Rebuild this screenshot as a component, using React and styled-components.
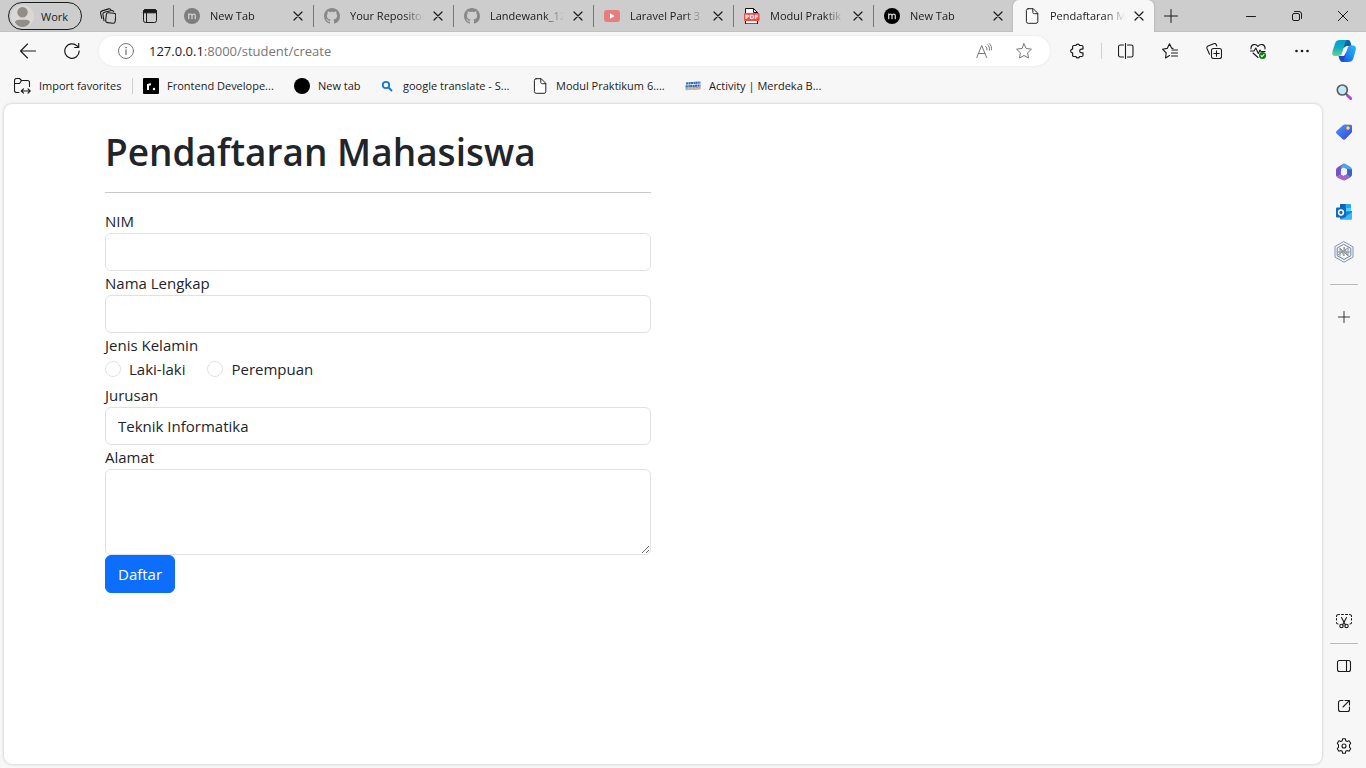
import React from "react";
import styled, { createGlobalStyle } from "styled-components";

const uiFont = `"Segoe UI", "Open Sans", "Noto Sans", sans-serif`;

const GlobalStyle = createGlobalStyle`
  *, *::before, *::after { box-sizing: border-box; }
  body {
    margin: 0;
    background: #f7f7f7;
    color: #1b1b1b;
    font-family: ${uiFont};
    font-size: 11px;
  }
  button, input, select, textarea { font-family: inherit; }
`;

const Browser = styled.div`
  display: flex;
  flex-direction: column;
  min-height: 100vh;
`;

/* Tab strip */
const TabStrip = styled.header`
  display: flex;
  height: 32px;
  background: #cdcdcd;
  box-shadow: inset 0 -1px 0 #c0c0c0;
`;

const Profile = styled.button`
  display: flex;
  align-items: center;
  gap: 7px;
  width: 74px;
  height: 28px;
  margin: 2px 5px 2px 8px;
  padding: 0 0 0 2px;
  border: 1px solid #1b1b1b;
  border-radius: 14px;
  background: transparent;
  color: #1b1b1b;
  font-size: 11px;
`;

const IconButton = styled.button`
  display: flex;
  flex: none;
  align-items: center;
  justify-content: center;
  width: ${(p) => p.$width || 44}px;
  height: ${(p) => p.$height || 32}px;
  padding: 0;
  border: 0;
  background: transparent;
  color: ${(p) => p.$color || "#1b1b1b"};
`;

const Tabs = styled.nav`
  display: flex;
  flex: 0 1 981px;
  min-width: 0;
  margin-left: 2px;
`;

const Tab = styled.div`
  display: flex;
  flex: 0 1 ${(p) => (p.$active ? 141 : 140)}px;
  align-items: center;
  min-width: 0;
  padding: 0 1px 0 ${(p) => (p.$active ? 11 : 10)}px;
  border-left: ${(p) => (p.$active ? "0" : "1px solid transparent")};
  border-image: linear-gradient(transparent 6px, #777 6px, #777 26px, transparent 26px) 1;
  border-radius: ${(p) => (p.$active ? "6px 6px 0 0" : "0")};
  background: ${(p) => (p.$active ? "#f7f7f7" : "transparent")};
  box-shadow: ${(p) => (p.$active ? "0 0 2px #999" : "none")};
  clip-path: inset(0 -3px 0 -3px);
`;

const TabTitle = styled.span`
  flex: 1;
  min-width: 0;
  margin-left: 10px;
  overflow: hidden;
  line-height: 20px;
  white-space: nowrap;
  mask-image: linear-gradient(to right, #000 calc(100% - 20px), transparent);
`;

const WindowControls = styled.div`
  display: flex;
  margin-left: auto;
`;

/* Address bar */
const Toolbar = styled.div`
  display: flex;
  align-items: center;
  height: 38px;
  padding: 0 2px 0 6px;
`;

const AddressBar = styled.div`
  display: flex;
  flex: 1;
  align-items: center;
  min-width: 0;
  height: 30px;
  margin: 0 5px;
  padding: 0 6px 0 19px;
  border-radius: 15px;
  background: #fff;
  box-shadow: 0 0 3px #e4e4e4;
`;

const Url = styled.div`
  flex: 1;
  margin-left: 15px;
  color: #767676;
  font-size: 13px;
  line-height: 20px;
  b { color: #1b1b1b; font-weight: 400; }
`;

const Divider = styled.span`
  width: 1px;
  height: 16px;
  margin: 0 2px;
  background: #cfcfcf;
`;

/* Area below the toolbar */
const Workspace = styled.div`
  display: flex;
  flex: 1;
`;

const MainColumn = styled.div`
  display: flex;
  flex: 1;
  flex-direction: column;
  min-width: 0;
`;

const Favorites = styled.nav`
  display: flex;
  align-items: center;
  height: 34px;
  padding: 0 0 2px 6px;
`;

const FavoriteList = styled.div`
  display: flex;
  gap: 8px;
`;

const Favorite = styled.a`
  display: flex;
  flex: none;
  align-items: center;
  gap: 8px;
  padding-left: 8px;
  color: #1b1b1b;
  line-height: 20px;
  text-decoration: none;
  white-space: nowrap;
`;

const FavoriteName = styled.span`
  width: ${(p) => p.$width}px;
`;

const Page = styled.main`
  flex: 1;
  margin: 0 0 4px 4px;
  padding-top: 24px;
  border-radius: 8px;
  background: #fff;
  box-shadow: 0 0 3px #bbb;
`;

const Container = styled.div`
  max-width: 1140px;
  margin: 0 auto;
`;

const Form = styled.form`
  width: 50%;
  padding: 0 12px;
  color: #212529;
  font-size: 15px;
  line-height: 24px;
`;

const Title = styled.h1`
  margin: 0;
  font-size: 37px;
  font-weight: 600;
  line-height: 48px;
  white-space: nowrap;
`;

const Rule = styled.hr`
  margin: 16px 0;
  border: 0;
  border-top: 1px solid #c8c9ca;
`;

const Label = styled.label`
  display: block;
`;

const fieldStyle = `
  display: block;
  width: 100%;
  padding: 6px 12px;
  border: 1px solid #dee2e6;
  border-radius: 6px;
  background: #fff;
  color: #212529;
  font-size: 15px;
  line-height: 24px;
`;

const TextInput = styled.input`
  ${fieldStyle}
  height: 38px;
`;

const Select = styled.select`
  ${fieldStyle}
  height: 38px;
  appearance: none;
`;

const TextArea = styled.textarea`
  ${fieldStyle}
  height: 86px;
  resize: vertical;
`;

const FieldGroup = styled.fieldset`
  margin: 0;
  padding: 0;
  border: 0;
`;

const Legend = styled.legend`
  padding: 0;
`;

const RadioRow = styled.div`
  display: flex;
  gap: 22px;
  padding-bottom: 2px;
`;

const RadioLabel = styled.label`
  display: flex;
  align-items: center;
  gap: 8px;
`;

const Radio = styled.input`
  width: 16px;
  height: 16px;
  margin: 0;
  border: 1px solid #dee2e6;
  border-radius: 50%;
  background: #fff;
  appearance: none;
  &:checked { border: 5px solid #0d6efd; }
`;

const Submit = styled.button`
  display: block;
  height: 38px;
  padding: 6px 12px;
  border: 1px solid #0d6efd;
  border-radius: 6px;
  background: #0d6efd;
  color: #fff;
  font-size: 15px;
  line-height: 24px;
`;

/* Right side rail */
const SideRail = styled.aside`
  display: flex;
  flex-direction: column;
  align-items: center;
  width: 44px;
  padding: 2px 0;
`;

const RailRule = styled.span`
  width: 28px;
  height: 1px;
  margin: ${(p) => (p.$compact ? 2 : 12)}px 0;
  background: #b9b9b9;
`;

const Spacer = styled.span`
  flex: 1;
`;

/* Drawings */
const Svg = styled.svg`
  display: block;
  flex: none;
  fill: none;
  stroke: currentColor;
  stroke-linecap: round;
  stroke-linejoin: round;
`;

const Icon = ({ size = 16, box = 16, stroke = 1, children }) => (
  <Svg width={size} height={size} viewBox={`0 0 ${box} ${box}`} strokeWidth={stroke} aria-hidden="true">
    {children}
  </Svg>
);

const Avatar = () => (
  <Icon size={23} box={22}>
    <circle cx="11" cy="11" r="11" fill="#dad7d4" stroke="none" />
    <circle cx="11" cy="7" r="5" fill="#918d89" stroke="none" />
    <path d="M4 16.500c0-2 2-2.500 7-2.500s7 .5 7 2.500c-1 3-4 4.500-7 4.500s-6-1.500-7-4.500z" fill="#918d89" stroke="none" />
  </Icon>
);

const WorkspacesIcon = () => (
  <Icon stroke={1.1}>
    <rect x="6" y="5" width="9.500" height="10" rx="2" transform="rotate(6 11 10)" />
    <path d="M4 12.800 2.900 6.500a2 2 0 0 1 1.500-2.200l7-1.800a2 2 0 0 1 2.200 1.100" />
    <path d="M1.800 10.500.6 5.200a2 2 0 0 1 1.500-2.300l6.500-2a2 2 0 0 1 2.200.8" />
  </Icon>
);

const TabActionsIcon = () => (
  <Icon>
    <rect x="1.500" y="1.500" width="13" height="13" rx="2" />
    <path d="M1.500 3.500c0-1.200.8-2 2-2h9c1.200 0 2 .8 2 2v1.300h-13z" fill="currentColor" />
    <path d="M4.500 5v9.500" />
  </Icon>
);

const MIcon = ({ color }) => (
  <Icon>
    <circle cx="8" cy="8" r="8" fill={color} stroke="none" />
    <path d="M4.700 10.700V6M4.700 7.400c.4-1.700 3.200-1.800 3.300.2v3.100M8 7.500c.5-1.800 3.300-1.800 3.300.2v3" stroke="#d0d0d0" strokeWidth="1.300" />
  </Icon>
);

const GithubIcon = () => (
  <Icon>
    <path stroke="none" fill="#888" d="M8 0C3.580 0 0 3.580 0 8c0 3.540 2.290 6.530 5.470 7.590.4.070.55-.17.55-.38 0-.19-.01-.82-.01-1.490-2.010.37-2.530-.49-2.690-.94-.09-.23-.48-.94-.82-1.130-.28-.15-.68-.52-.01-.53.63-.01 1.080.58 1.230.82.72 1.210 1.870.87 2.330.66.070-.52.28-.87.51-1.070-1.780-.2-3.640-.89-3.640-3.950 0-.87.31-1.590.82-2.150-.08-.2-.36-1.020.08-2.120 0 0 .67-.21 2.200.82.64-.18 1.320-.27 2-.27s1.360.09 2 .27c1.530-1.040 2.200-.82 2.200-.82.44 1.100.16 1.920.08 2.120.51.56.82 1.270.82 2.150 0 3.070-1.870 3.750-3.650 3.950.29.25.54.73.54 1.480 0 1.070-.01 1.930-.01 2.200 0 .21.15.46.55.38A8.010 8.010 0 0 0 16 8c0-4.420-3.580-8-8-8z" />
  </Icon>
);

const YoutubeIcon = () => (
  <Icon>
    <rect y="2" width="16" height="12" rx="3" fill="#e87c7f" stroke="none" />
    <path d="M6 5.300v5.400L10.700 8z" fill="#fff" stroke="none" />
  </Icon>
);

const PdfText = styled.text`
  fill: #fff;
  stroke: none;
  font: 700 6px "DejaVu Sans", sans-serif;
`;

const PdfIcon = () => (
  <Icon>
    <path d="M1.500 15.500V.5h8L13.500 4.500v11z" fill="#fff" stroke="#111" />
    <path d="M9.500.5v4h4" stroke="#111" />
    <rect x="0" y="5" width="15.500" height="8" rx="1" fill="#f44" stroke="none" />
    <PdfText x="1" y="11">PDF</PdfText>
  </Icon>
);

const FileIcon = () => (
  <Icon>
    <path d="M4.200.7h5l4.600 4.600v8.200a1.800 1.800 0 0 1-1.800 1.800H4.200a1.800 1.800 0 0 1-1.800-1.800v-11A1.800 1.800 0 0 1 4.200.7z" stroke="#222" fill="#fff" />
    <path d="M8.800.9v3.300c0 1 .5 1.500 1.500 1.500h3.300" stroke="#222" />
  </Icon>
);

const CloseIcon = () => (
  <Icon size={10} box={10} stroke={1.2}><path d="m1 1 8 8M9 1 1 9" /></Icon>
);

const PlusIcon = ({ size = 14 }) => (
  <Icon size={size} box={14}><path d="M7 .5v13M.5 7h13" /></Icon>
);

const BackIcon = () => (
  <Icon stroke={1.1}><path d="M15.500 8H.7M7.500 1 .6 8l6.900 7" /></Icon>
);

const ReloadIcon = () => (
  <Icon stroke={1.2}><path d="M15.200 8A7.200 7.200 0 1 1 13 2.900l1.500 1.500M14.700.5v4h-4" /></Icon>
);

const InfoIcon = () => (
  <Icon><g stroke="#767676"><circle cx="8" cy="8" r="7.500" /><path d="M8 7v4.500" strokeWidth="1.300" /><circle cx="8" cy="4.700" r=".4" /></g></Icon>
);

const ReadAloudIcon = () => (
  <Icon><path d="m.8 14.500 4.900-12 4.900 12M2.300 10.500H9M9.700 3.500c1 .8 1.400 2 1.200 3.400M11.500 1.700c1.700 1.400 2.300 3.400 1.900 5.500M13.300.5c2 1.800 2.500 4 2.100 6.400" /></Icon>
);

const StarIcon = () => (
  <Icon><path d="m8 .8 2.200 4.700 5.200.7-3.800 3.600.9 5.200L8 12.500 3.500 15l.9-5.200L.6 6.200l5.200-.7z" /></Icon>
);

const PuzzleIcon = () => (
  <Icon stroke={1.2}><path d="M4.800 2.500h2.100a1.900 1.900 0 0 1 3.700 0h2.200a1.200 1.200 0 0 1 1.200 1.200v2.400h-1.400a1.900 1.900 0 0 0 0 3.800H14v2.400a1.200 1.200 0 0 1-1.200 1.200h-2.200a1.900 1.900 0 0 1-3.700 0H4.800a1.200 1.200 0 0 1-1.200-1.200V9.900a1.900 1.900 0 0 1 0-3.800V3.700a1.200 1.200 0 0 1 1.200-1.200z" /></Icon>
);

const SplitIcon = () => (
  <Icon stroke={1.1}><path d="M5.500 2H2.300C1.300 2 .5 2.800.5 3.800v8.400c0 1 .8 1.800 1.800 1.800h3.200M7.500.5v15M9.500 2h3.700c1 0 1.800.8 1.800 1.800v8.400c0 1-.8 1.800-1.800 1.800H9.500" /></Icon>
);

const FavoritesIcon = () => (
  <Icon stroke={1.1}><path d="M7.500 12.500 3.500 15l.7-5L.5 6.200l4.700-.8L7.500.7l2.200 4.500 1.300.2M10 7h5.500M9.500 10h6M9.500 13h6" /></Icon>
);

const CollectionsIcon = () => (
  <Icon stroke={1.1}><rect x="5.500" y="5.500" width="10" height="10" rx="2" /><path d="M10.500 7.800v5.400M7.800 10.500h5.400M3.500 11.300 1 5.500a2 2 0 0 1 1-2.500L7.700.7a2 2 0 0 1 2.600 1l.5 1.300" /></Icon>
);

const HeartIcon = () => (
  <Icon stroke={1.1}>
    <path d="M1 6C.5 1 6 .2 8 3.500 10 .2 15.500 1 15 6M.5 8H4l1.800-3 2.500 5.500L10 7l1 1.500h4M3 10l5 4.500" />
    <circle cx="12.500" cy="12.500" r="3.500" fill="#107c10" stroke="none" /><path d="m11 12.700 1 1 2-2.200" stroke="#fff" />
  </Icon>
);

const DotsIcon = () => (
  <Icon><g fill="currentColor" stroke="none"><circle cx="2.500" cy="8" r="1.300" /><circle cx="8" cy="8" r="1.300" /><circle cx="13.500" cy="8" r="1.300" /></g></Icon>
);

const CopilotIcon = () => (
  <Icon size={24} box={24}>
    <defs>
      <linearGradient id="copilotLeft" x1="0" y1="0" x2="0" y2="1"><stop offset="0" stopColor="#079dd2" /><stop offset=".5" stopColor="#15aebd" /><stop offset="1" stopColor="#6bd58b" /></linearGradient>
      <linearGradient id="copilotRight" x1="0" y1="1" x2="1" y2="0"><stop offset="0" stopColor="#1b50d8" /><stop offset=".6" stopColor="#1b96f5" /><stop offset="1" stopColor="#2bbcf4" /></linearGradient>
    </defs>
    <g stroke="none">
      <path d="M12 1h4c2 0 2.500 2 3 4l.5 2h-5L10 10z" fill="#07639f" />
      <path d="M6.500 17h5.500l3-5-1 9c-.5 1.500-1.500 2-3 2-2.500 0-3.500-2-4.500-6z" fill="#1a49cf" />
      <path d="M8 1h8c-2 0-2.500 1.500-3 3l-3 10c-.6 2-1.500 3-3.500 3H3c-3 0-3-2.500-2.400-5L3 4.500C3.700 2 5.500 1 8 1z" fill="url(#copilotLeft)" />
      <path d="M16 23H9c2 0 2.800-1 3.300-3l3-10c.6-2 1.500-3.500 3.500-3.500H21c3 0 3.300 2.500 2.600 5l-2.300 8C20.600 22 19 23 16 23z" fill="url(#copilotRight)" />
    </g>
  </Icon>
);

const ImportIcon = () => (
  <Icon size={17} box={17} stroke={1.1}><path d="M5 14.500H2.500a2 2 0 0 1-2-2v-10a2 2 0 0 1 2-2h3l2 2h6a2 2 0 0 1 2 2v4M.5 5.500h5l2-3M7.500 13h8.500M9.500 10.800 7.300 13l2.200 2.200M14 10.800l2.200 2.200-2.200 2.200" /></Icon>
);

const RoadmapIcon = () => (
  <Icon><rect width="16" height="16" rx="1" fill="#000" stroke="none" /><path d="M5 12V6M5 8c.3-1.300 1.400-1.800 3-1.600" stroke="#fff" strokeWidth="2" strokeLinecap="butt" /><circle cx="11" cy="11" r="1.200" fill="#fff" stroke="none" /></Icon>
);

const BlackDotIcon = () => (
  <Icon><circle cx="8" cy="8" r="8" fill="#000" stroke="none" /></Icon>
);

const BlueSearchIcon = () => (
  <Icon><g stroke="#1976d2" strokeWidth="1.800"><circle cx="7" cy="7" r="3.200" /><path d="m9.500 9.500 3 3" /></g></Icon>
);

const MerdekaIcon = () => (
  <Icon>
    <g strokeLinecap="butt">
      <path d="M1 5.500 15.500 4.500M.5 8.500 15.500 7.500" stroke="#3469b5" strokeWidth="2.200" strokeDasharray="2.400 .4 1.600 .3" />
      <path d="M.5 10.300 15.500 9.500" stroke="#79a3d6" strokeWidth="1.400" strokeDasharray="3 .4" />
      <path d="M.5 12c5-1.800 9 .2 15-1.500" stroke="#f0a075" strokeWidth="1.300" />
    </g>
  </Icon>
);

const MagnifierIcon = () => (
  <Icon>
    <path d="m10.200 10 1.500 1.500" stroke="#555" strokeWidth="2" />
    <path d="m12 12 2.700 2.500" stroke="#b73ee8" strokeWidth="3" />
    <circle cx="6.300" cy="6" r="5" fill="#c5e7fa" stroke="#5b5b5b" strokeWidth="1.700" />
  </Icon>
);

const TagIcon = () => (
  <Icon>
    <defs><linearGradient id="tagBlue" x1="0" y1="0" x2="1" y2="1"><stop stopColor="#4aa0f8" /><stop offset="1" stopColor="#3d3ddb" /></linearGradient></defs>
    <path d="M9 .5 14.500.7c1 0 1.500.6 1.500 1.500v5c0 .7-.2 1.200-.7 1.700l-5.800 6c-1 1-2 1-3 0L.7 9.700c-.9-1-.9-2 .1-2.900L7 1.200C7.600.7 8.200.5 9 .5z" fill="url(#tagBlue)" stroke="none" />
    <circle cx="12" cy="4" r="1.500" fill="#f5e6b0" stroke="#f5b821" />
  </Icon>
);

const OfficeIcon = () => (
  <Icon size={18} box={18}>
    <g stroke="none">
      <path d="M9 .5 3 4C1.700 4.800 1 5.800 1 7.300v4.500c0 1 .3 1.700 1 2.200l4-2.500V6.800c0-.8.3-1.300 1-1.700L11.500 2.500z" fill="#6a55cc" />
      <path d="M8 1.200C9 .6 10 .6 11 1.200L15.300 3.800c1.200.8 1.700 1.800 1.700 3.200v2L12 6.200 8.500 4.500 6 6V3.500z" fill="#4aa8e8" />
      <path d="M17 6.500v4.800c0 1.300-.6 2.300-1.800 3L12 16.200l-3-3.700 3-2V6z" fill="#3862c4" />
      <path d="M2 14l4-2.500 3 1.600 3-1.800 3.500 2.700-4.700 3c-1.100.6-2.400.6-3.500 0L3 15c-.5-.3-.8-.6-1-1z" fill="#a765c8" />
      <circle cx="9" cy="9" r="3.200" fill="#f3f3fa" />
    </g>
  </Icon>
);

const OutlookIcon = () => (
  <Icon>
    <g stroke="none">
      <rect x="4" y="0" width="11" height="9" rx="1" fill="#28a8ea" /><path d="M4 0h5.500v5H4z" fill="#0a64b4" /><path d="M9.500 4H15v4H9.500z" fill="#50d0ff" />
      <path d="M4 8 16 7v7c0 .8-.5 1.500-1.500 1.500H5.500C4.500 15.500 4 15 4 14z" fill="#1684d4" /><path d="m6 15 10-7v6c0 .8-.5 1.500-1.500 1.500z" fill="#39baf0" />
      <rect y="3.500" width="10" height="10" rx="1" fill="#0f6cbd" />
    </g>
    <circle cx="5" cy="8.500" r="2.400" stroke="#fff" strokeWidth="1.500" />
  </Icon>
);

const HexagonIcon = () => (
  <Icon size={22} box={22}>
    <path d="m11 .8 9 5.100v10.200l-9 5.100-9-5.100V5.900z" stroke="#7f8fc4" />
    <path d="m11 3.500 6.800 3.800v7.400L11 18.500l-6.800-3.800V7.300z" stroke="#7a8390" />
    <path d="M7 15V7l4 8V6l4 9V7M5 11h12M7 7l8 8M5 14l10-7" stroke="#8c949d" />
  </Icon>
);

const SnipIcon = () => (
  <Icon stroke={1.1}><path d="M2.500 1.500h1M5.500 1.500h2M9.500 1.500h2M13.500 1.500c1 0 2 .8 2 2M15.500 5.500v1.500M15.500 9.500c0 1-.5 1.500-1.500 1.500M2.500 1.500c-1 0-2 .8-2 2M.5 5.500V7M.5 9.500c0 1 .5 1.500 1.500 1.500M5.500 4.500 9.500 12M10.500 4.500 6.500 12" /><circle cx="5.500" cy="13" r="1.700" /><circle cx="10.500" cy="13" r="1.700" /></Icon>
);

const PanelIcon = () => (
  <Icon stroke={1.1}><rect x="1.500" y="2.500" width="13" height="11" rx="2" /><path d="M10.500 2.500v11" /></Icon>
);

const ExternalIcon = () => (
  <Icon stroke={1.1}><path d="M7 2.500H4.500a2 2 0 0 0-2 2v7a2 2 0 0 0 2 2h7a2 2 0 0 0 2-2V9M9 2.500h4.500V7M13.300 2.700 7 9" /></Icon>
);

const GearIcon = () => (
  <Icon stroke={1.1}>
    <path d="M6.700.7h2.600l.5 2.100 1.300.7 2-.7 1.600 2.400-1.200 1.700v2.200l1.200 1.700-1.600 2.400-2-.7-1.300.7-.5 2.100H6.700l-.5-2.100-1.300-.7-2 .7-1.600-2.400 1.200-1.700V6.900L1.300 5.200l1.600-2.400 2 .7 1.300-.7z" />
    <circle cx="8" cy="8" r="2" />
  </Icon>
);

const tabs = [
  { title: "New Tab", icon: <MIcon color="#7d7d7d" /> },
  { title: "Your Repositor", icon: <GithubIcon /> },
  { title: "Landewank_12", icon: <GithubIcon /> },
  { title: "Laravel Part 3 -", icon: <YoutubeIcon /> },
  { title: "Modul Praktik", icon: <PdfIcon /> },
  { title: "New Tab", icon: <MIcon color="#000" /> },
  { title: "Pendaftaran M", icon: <FileIcon />, active: true },
];

const favorites = [
  { name: "Frontend Develope...", width: 111, icon: <RoadmapIcon /> },
  { name: "New tab", width: 45, icon: <BlackDotIcon /> },
  { name: "google translate - S...", width: 113, icon: <BlueSearchIcon /> },
  { name: "Modul Praktikum 6....", width: 113, icon: <FileIcon /> },
  { name: "Activity | Merdeka B...", width: 115, icon: <MerdekaIcon /> },
];

const railApps = [
  ["Search", <MagnifierIcon />],
  ["Shopping", <TagIcon />],
  ["Microsoft 365", <OfficeIcon />],
  ["Outlook", <OutlookIcon />],
  ["Hexagon", <HexagonIcon />],
];

export default function App() {
  return (
    <Browser>
      <GlobalStyle />
      <TabStrip>
        <Profile type="button"><Avatar />Work</Profile>
        <IconButton $width={42} aria-label="Workspaces"><WorkspacesIcon /></IconButton>
        <IconButton $width={42} aria-label="Tab actions"><TabActionsIcon /></IconButton>
        <Tabs>
          {tabs.map((tab, i) => (
            <Tab key={i} $active={tab.active}>
              {tab.icon}
              <TabTitle>{tab.title}</TabTitle>
              <IconButton $width={28} aria-label="Close tab"><CloseIcon /></IconButton>
            </Tab>
          ))}
        </Tabs>
        <IconButton $width={34} aria-label="New tab"><PlusIcon /></IconButton>
        <WindowControls>
          <IconButton $width={46} aria-label="Minimize"><Icon size={10} box={10}><path d="M.5 5.500h9" /></Icon></IconButton>
          <IconButton $width={46} aria-label="Restore">
            <Icon size={10} box={10}><rect x=".5" y="2.500" width="7" height="7" rx="1.500" /><path d="M2.500.5H7A2.500 2.500 0 0 1 9.500 3v4.500" /></Icon>
          </IconButton>
          <IconButton $width={46} aria-label="Close"><Icon size={10} box={10}><path d="m0 0 10 10M10 0 0 10" /></Icon></IconButton>
        </WindowControls>
      </TabStrip>

      <Toolbar>
        <IconButton aria-label="Back"><BackIcon /></IconButton>
        <IconButton aria-label="Refresh"><ReloadIcon /></IconButton>
        <AddressBar>
          <InfoIcon />
          <Url><b>127.0.0.1</b>:8000/student/create</Url>
          <IconButton $width={40} $height={30} $color="#767676" aria-label="Read aloud"><ReadAloudIcon /></IconButton>
          <IconButton $width={40} $height={30} $color="#767676" aria-label="Add to favorites"><StarIcon /></IconButton>
        </AddressBar>
        <IconButton aria-label="Extensions"><PuzzleIcon /></IconButton>
        <Divider />
        <IconButton aria-label="Split screen"><SplitIcon /></IconButton>
        <IconButton aria-label="Favorites"><FavoritesIcon /></IconButton>
        <IconButton aria-label="Collections"><CollectionsIcon /></IconButton>
        <IconButton aria-label="Browser essentials"><HeartIcon /></IconButton>
        <IconButton aria-label="More"><DotsIcon /></IconButton>
        <IconButton $width={40} aria-label="Copilot"><CopilotIcon /></IconButton>
      </Toolbar>

      <Workspace>
        <MainColumn>
          <Favorites>
            <Favorite href="#"><ImportIcon /><FavoriteName $width={91}>Import favorites</FavoriteName></Favorite>
            <Divider />
            <FavoriteList>
              {favorites.map((f) => (
                <Favorite key={f.name} href="#">{f.icon}<FavoriteName $width={f.width}>{f.name}</FavoriteName></Favorite>
              ))}
            </FavoriteList>
          </Favorites>
          <Page>
            <Container>
              <Form onSubmit={(e) => e.preventDefault()}>
                <Title>Pendaftaran Mahasiswa</Title>
                <Rule />
                <Label htmlFor="nim">NIM</Label>
                <TextInput id="nim" type="text" />
                <Label htmlFor="nama">Nama Lengkap</Label>
                <TextInput id="nama" type="text" />
                <FieldGroup>
                  <Legend>Jenis Kelamin</Legend>
                  <RadioRow>
                    <RadioLabel><Radio type="radio" name="gender" value="L" />Laki-laki</RadioLabel>
                    <RadioLabel><Radio type="radio" name="gender" value="P" />Perempuan</RadioLabel>
                  </RadioRow>
                </FieldGroup>
                <Label htmlFor="jurusan">Jurusan</Label>
                <Select id="jurusan" defaultValue="ti"><option value="ti">Teknik Informatika</option></Select>
                <Label htmlFor="alamat">Alamat</Label>
                <TextArea id="alamat" />
                <Submit type="submit">Daftar</Submit>
              </Form>
            </Container>
          </Page>
        </MainColumn>
        <SideRail>
          {railApps.map(([name, icon]) => (
            <IconButton key={name} $height={40} aria-label={name}>{icon}</IconButton>
          ))}
          <RailRule />
          <IconButton $height={40} aria-label="Customize"><PlusIcon size={12} /></IconButton>
          <Spacer />
          <IconButton $height={40} aria-label="Screenshot"><SnipIcon /></IconButton>
          <RailRule $compact />
          <IconButton $height={40} aria-label="Side pane"><PanelIcon /></IconButton>
          <IconButton $height={40} aria-label="Open link"><ExternalIcon /></IconButton>
          <IconButton $height={40} aria-label="Settings"><GearIcon /></IconButton>
        </SideRail>
      </Workspace>
    </Browser>
  );
}
